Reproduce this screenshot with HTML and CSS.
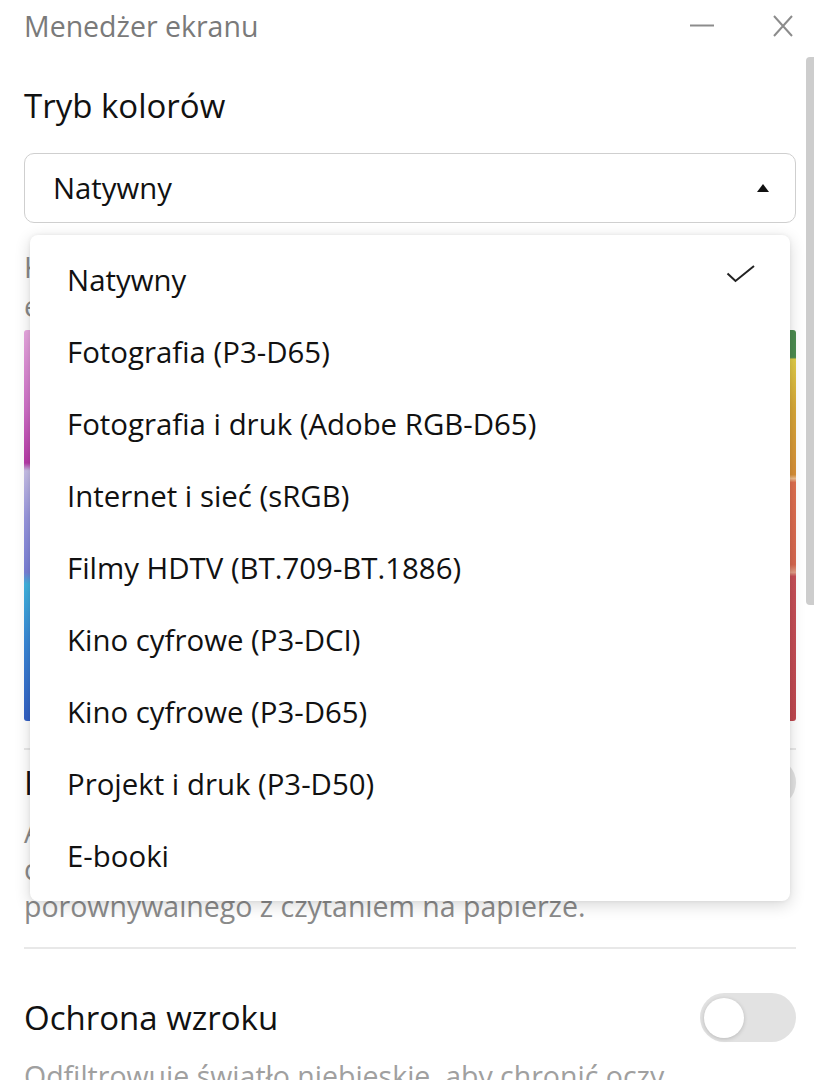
FILE: index.html
```html
<!DOCTYPE html>
<html lang="pl">
<head>
<meta charset="utf-8">
<title>Menedżer ekranu</title>
<link rel="stylesheet" href="styles.css">
</head>
<body>
<div class="window">
  <header class="titlebar">
    <div class="title">Menedżer ekranu</div>
    <div class="controls">
      <svg class="ctl" width="26" height="26" viewBox="0 0 26 26"><path d="M1 12.5H25" stroke="#8c8c8c" stroke-width="2"/></svg>
      <svg class="ctl" width="24" height="24" viewBox="0 0 24 24"><path d="M3 2L21 22M21 2L3 22" stroke="#8c8c8c" stroke-width="2"/></svg>
    </div>
  </header>

  <main class="content">
    <section class="section first">
      <h2 class="heading">Tryb kolorów</h2>
      <div class="select">
        <span class="select-value">Natywny</span>
        <svg class="caret" width="12" height="8" viewBox="0 0 12 8"><path d="M6 0L12 8H0Z" fill="#111"/></svg>
      </div>
      <p class="desc">Kolory są wyświetlane w natywnej gamie,<br>
        efekt żywych i nasyconych barw.</p>
      <div class="palette">
        <div class="pal-left"></div>
        <div class="pal-right"></div>
      </div>
    </section>

    <hr class="divider">

    <section class="section second">
      <div class="row">
        <h2 class="heading">Inteligentny tryb czytania</h2>
        <div class="toggle"><span class="knob"></span></div>
      </div>
      <p class="desc">Automatycznie dostosowuje kolory,<br>
        co zapewnia komfort czytania<br>
        porównywalnego z czytaniem na papierze.</p>
    </section>

    <hr class="divider">

    <section class="section third">
      <div class="row">
        <h2 class="heading">Ochrona wzroku</h2>
        <div class="toggle"><span class="knob"></span></div>
      </div>
      <p class="desc">Odfiltrowuje światło niebieskie, aby chronić oczy.</p>
    </section>
  </main>

  <div class="scroll-thumb"></div>

  <ul class="menu">
    <li class="menu-item selected"><span>Natywny</span>
      <svg class="check" width="30" height="20" viewBox="0 0 30 20"><path d="M1.5 9.5L9.5 17L28 2" fill="none" stroke="#222" stroke-width="2"/></svg>
    </li>
    <li class="menu-item">Fotografia (P3-D65)</li>
    <li class="menu-item">Fotografia i druk (Adobe RGB-D65)</li>
    <li class="menu-item">Internet i sieć (sRGB)</li>
    <li class="menu-item">Filmy HDTV (BT.709-BT.1886)</li>
    <li class="menu-item">Kino cyfrowe (P3-DCI)</li>
    <li class="menu-item">Kino cyfrowe (P3-D65)</li>
    <li class="menu-item">Projekt i druk (P3-D50)</li>
    <li class="menu-item">E-booki</li>
  </ul>
</div>
</body>
</html>
```

FILE: styles.css
```css
* { box-sizing: border-box; }
html, body { margin: 0; padding: 0; background: #fff; }
body {
  font-family: "Open Sans", "Noto Sans", "Liberation Sans", sans-serif;
  color: #111;
  width: 814px;
  height: 1080px;
  overflow: hidden;
}
.window {
  position: relative;
  width: 814px;
  height: 1080px;
  overflow: hidden;
}
.titlebar {
  display: flex;
  justify-content: space-between;
  align-items: center;
  height: 52px;
  padding: 0 19px 0 24px;
}
.title {
  font-size: 28.5px;
  line-height: 40px;
  color: #7a7a7a;
}
.controls {
  display: flex;
  align-items: center;
  gap: 56px;
}
.ctl { display: block; }

.content {
  padding: 32px 18px 0 24px;
}
.section { margin: 0; }
.heading {
  margin: 0;
  font-weight: 400;
  font-size: 33px;
  line-height: 44px;
  color: #111;
  white-space: nowrap;
}
.select {
  margin-top: 25px;
  height: 70px;
  border: 1.5px solid #cfcfcf;
  border-radius: 10px;
  display: flex;
  align-items: center;
  justify-content: space-between;
  padding: 0 26px 0 28px;
}
.select-value { font-size: 29.3px; }
.caret { display: block; }
.desc {
  margin: 0;
  font-size: 28.5px;
  line-height: 37px;
  color: #8a8a8a;
  white-space: nowrap;
}
.first .desc { margin-top: 25px; line-height: 39px; }
.palette {
  margin-top: 4px;
  height: 391px;
  display: flex;
  border-radius: 3px;
  overflow: hidden;
}
.pal-left {
  flex: 1;
  background: linear-gradient(to bottom,
    #e8a8e0 0%, #d070c8 20%, #b83aa8 34%,
    #c8c0e8 36%, #9a98e0 48%, #7a80d8 62%,
    #40b4e0 65%, #3a88d8 80%, #3460c4 100%);
}
.pal-right {
  flex: 1;
  background: linear-gradient(to bottom,
    #4c8c50 0%, #4c8c50 7%, #e0cc48 7.5%, #d8a838 20%, #d89038 37%,
    #f0c090 38%, #e07050 39%, #d86850 60%, #e4a088 62%,
    #c85058 63%, #c04850 100%);
}
.divider {
  border: 0;
  height: 2px;
  background: #e8e8e8;
  margin: 27px 0 0;
}
.second + .divider { margin-top: 22px; }
.row {
  display: flex;
  align-items: center;
  justify-content: space-between;
}
.second .row { margin-top: 8px; }
.second .desc { margin-top: 7px; }
.third .row { margin-top: 44px; }
.third .desc { margin-top: 16px; color: #a0a0a0; }
.toggle {
  flex: none;
  width: 96px;
  height: 49px;
  border-radius: 25px;
  background: #e2e2e2;
  display: flex;
  align-items: center;
  padding-left: 4px;
}
.knob {
  width: 40px;
  height: 40px;
  border-radius: 50%;
  background: #fff;
  box-shadow: 0 1px 4px rgba(0,0,0,0.18);
}

.scroll-thumb {
  position: absolute;
  right: 0;
  top: 57px;
  width: 8px;
  height: 548px;
  background: #cdcdcd;
  border-radius: 4px 0 0 4px;
}

.menu {
  position: absolute;
  left: 30px;
  top: 235px;
  width: 760px;
  margin: 0;
  padding: 9px 0;
  list-style: none;
  background: #fff;
  border-radius: 8px;
  box-shadow: 0 4px 16px rgba(0,0,0,0.16), 0 0 4px rgba(0,0,0,0.06);
}
.menu-item {
  height: 72px;
  display: flex;
  align-items: center;
  justify-content: space-between;
  padding: 0 34px 0 37px;
  font-size: 29.4px;
  color: #111;
}
.check { display: block; margin-top: -12px; }
```
